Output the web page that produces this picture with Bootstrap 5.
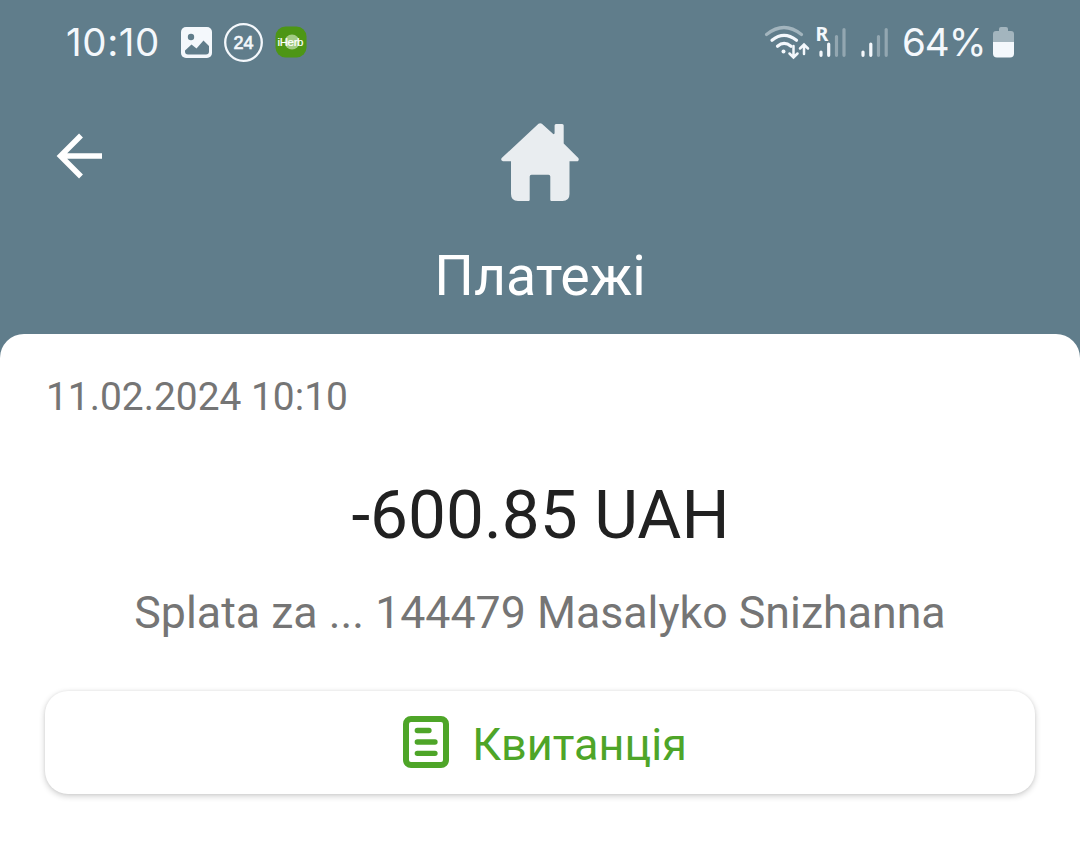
<!DOCTYPE html>
<html lang="uk">

<head>
    <meta charset="UTF-8">
    <meta name="viewport" content="width=device-width, initial-scale=1.0">
    <title>Платежі</title>
    <!-- Bootstrap CSS -->
    <link href="https://cdn.jsdelivr.net/npm/bootstrap@5.3.0/dist/css/bootstrap.min.css" rel="stylesheet">
    <style>
        body {
            font-family: Roboto, "Noto Sans", sans-serif;
            background-color: #607d8b;
        }

        .screen {
            width: 1080px;
            height: 847px;
        }

        .status-bar {
            height: 84px;
            padding: 0 65px 0 66px;
            color: #f4f8fc;
            font-family: Inter, sans-serif;
            font-size: 38.5px;
            font-weight: 400;
            line-height: 84px;
        }

        .clock {
            width: 114px;
            letter-spacing: .6px;
        }

        .percent {
            width: 91px;
            letter-spacing: -1px;
        }

        .top-row {
            height: 156px;
        }

        .back-btn {
            padding: 49px 0 0 56px;
        }

        .home-icon {
            margin-top: 38px;
        }

        .page-title {
            font-size: 55.5px;
            line-height: 72px;
            padding-top: 1px;
            margin-bottom: 21px;
        }

        .sheet {
            padding: 39px 45px 0;
            border-radius: 24px 24px 0 0;
        }

        .pay-date {
            color: #757575;
            font-size: 38.9px;
            line-height: 48px;
            margin-bottom: 49px;
            padding-left: 1px;
        }

        .pay-amount {
            color: #212121;
            font-size: 67.5px;
            line-height: 90px;
            margin-bottom: 23px;
            padding-left: 1px;
        }

        .pay-desc {
            color: #757575;
            font-size: 44.7px;
            line-height: 60px;
            margin-bottom: 48px;
        }

        .receipt-btn {
            --bs-btn-color: #4ea528;
            --bs-btn-bg: #fff;
            --bs-btn-border-width: 0;
            --bs-btn-border-radius: 23px;
            height: 103px;
            padding: 0 0 0 10px;
            font-size: 45px;
            line-height: 60px;
            box-shadow: 0 2px 6px rgba(0, 0, 0, .2), 0 0 3px rgba(0, 0, 0, .06);
        }

        .receipt-icon {
            margin: 0 23px 2px 0;
        }

        .receipt-label {
            padding-top: 5px;
        }
    </style>
</head>

<body>
    <div class="screen d-flex flex-column overflow-hidden">
        <!-- Barra de estado -->
        <div class="status-bar d-flex justify-content-between">
            <div class="d-flex align-items-center">
                <span class="clock">10:10</span>
                <svg width="130" height="84" viewBox="180 0 130 84">
                    <rect x="181" y="27" width="31" height="31" rx="5" fill="#f4f8fc" />
                    <circle cx="191" cy="37" r="3.2" fill="#607d8b" />
                    <path d="M185 50.500L191.500 44.500L196.500 48.500L203.500 40.500L209 46V51.500Q209 54.500 206 54.500H188Q185 54.500 185 51.500Z" fill="#607d8b" />
                    <circle cx="243.500" cy="42.500" r="18.300" fill="none" stroke="#f4f8fc" stroke-width="2.300" />
                    <text x="243.500" y="49" text-anchor="middle" font-family="Liberation Sans, sans-serif" font-size="18" font-weight="400" fill="#f4f8fc" stroke="#f4f8fc" stroke-width=".7">24</text>
                    <rect x="275.500" y="26.500" width="31" height="31" rx="10" fill="#4d9615" />
                    <circle cx="292" cy="42" r="7.500" fill="#a3cc85" />
                    <text x="290.500" y="46.300" text-anchor="middle" font-family="Liberation Sans, sans-serif" font-size="11.500" font-weight="400" textLength="26" fill="#fff" stroke="#fff" stroke-width=".2">iHerb</text>
                </svg>
            </div>
            <div class="d-flex align-items-center">
                <svg width="138" height="84" viewBox="764 0 138 84" fill="none" stroke="#f4f8fc" stroke-width="3.200" stroke-linecap="round">
                    <path d="M766.500 34.500Q784 20.500 801.500 34.500" stroke="#a3b5be" />
                    <path d="M772 40.300Q784 30.500 796.500 40.300" />
                    <path d="M777.500 46.200Q784 40.500 791 46.200" />
                    <circle cx="783.500" cy="51.500" r="2" fill="#f4f8fc" stroke="none" />
                    <path d="M793.500 46V57M789.500 53.500L793.500 57.500L797.500 53.500M804 54V45M800 48.500L804 44.500L808 48.500" stroke-width="2.500" />
                    <path d="M836.500 36.500V55.300M844 29.500V55.300M878.500 36.500V55.300M886.200 29.500V55.300" stroke="#93a7b1" />
                    <path d="M821 52V55.300M828.700 44V55.300M863 52V55.300M870.800 44V55.300" />
                    <text x="815.500" y="41.200" font-family="Noto Sans, sans-serif" font-size="19.500" font-weight="bold" fill="#f4f8fc" stroke="none">R</text>
                </svg>
                <span class="percent">64%</span>
                <svg width="22" height="84" viewBox="993 0 22 84">
                    <path d="M993 42V34Q993 31 996 31H999V29Q999 27 1001 27H1006Q1008 27 1008 29V31H1011Q1014 31 1014 34V42Z" fill="#a3b5be" />
                    <path d="M993 42H1014V53.500Q1014 57.500 1010 57.500H997Q993 57.500 993 53.500Z" fill="#f4f8fc" />
                </svg>
            </div>
        </div>

        <!-- Encabezado -->
        <div class="row g-0 top-row">
            <div class="col-4 back-btn">
                <svg class="d-block" width="48" height="46" viewBox="56 133 48 46" fill="none" stroke="#fff" stroke-width="5.500">
                    <path d="M102 156H60M81 135.500L60.500 156L81 176.500" />
                </svg>
            </div>
            <div class="col-4 d-flex justify-content-center">
                <svg class="home-icon" width="80" height="80" viewBox="500 122 80 80">
                    <path d="M538.500 123.800Q540.200 122.500 541.900 123.800L553.500 134.200L554.600 133.500V125.500Q554.600 124 556 124H562.200Q563.700 124 563.700 125.500V143.500L578.300 158Q579.500 160 577.700 161.300H569.500V194Q569.500 201 562.500 201H551.500Q550.300 201 550.300 199.800V176.500Q550.300 174.700 548.500 174.700H531.500Q529.700 174.700 529.700 176.500V199.800Q529.700 201 528.500 201H518Q511 201 511 194V161.300H503Q500.200 160.500 501.700 158Z" fill="#e9edf0" />
                </svg>
            </div>
        </div>
        <h1 class="page-title text-center text-white fw-normal">Платежі</h1>

        <!-- Detalle del pago -->
        <div class="sheet bg-white flex-grow-1">
            <div class="pay-date">11.02.2024 10:10</div>
            <div class="pay-amount text-center">-600.85 UAH</div>
            <div class="pay-desc text-center">Splata za ... 144479 Masalyko Snizhanna</div>
            <button type="button" class="btn receipt-btn w-100 d-flex align-items-center justify-content-center">
                <svg class="receipt-icon" width="46" height="52" viewBox="403 716 46 52" fill="none" stroke="#4ea528" stroke-linecap="round">
                    <rect x="406" y="719" width="40" height="46" rx="5" stroke-width="6" />
                    <path d="M417.300 730.500H429M417.300 742H435M417.300 753.300H435" stroke-width="5.300" />
                </svg>
                <span class="receipt-label">Квитанція</span>
            </button>
        </div>
    </div>

    <!-- Bootstrap JS -->
    <script src="https://cdn.jsdelivr.net/npm/bootstrap@5.3.0/dist/js/bootstrap.bundle.min.js"></script>
</body>

</html>
